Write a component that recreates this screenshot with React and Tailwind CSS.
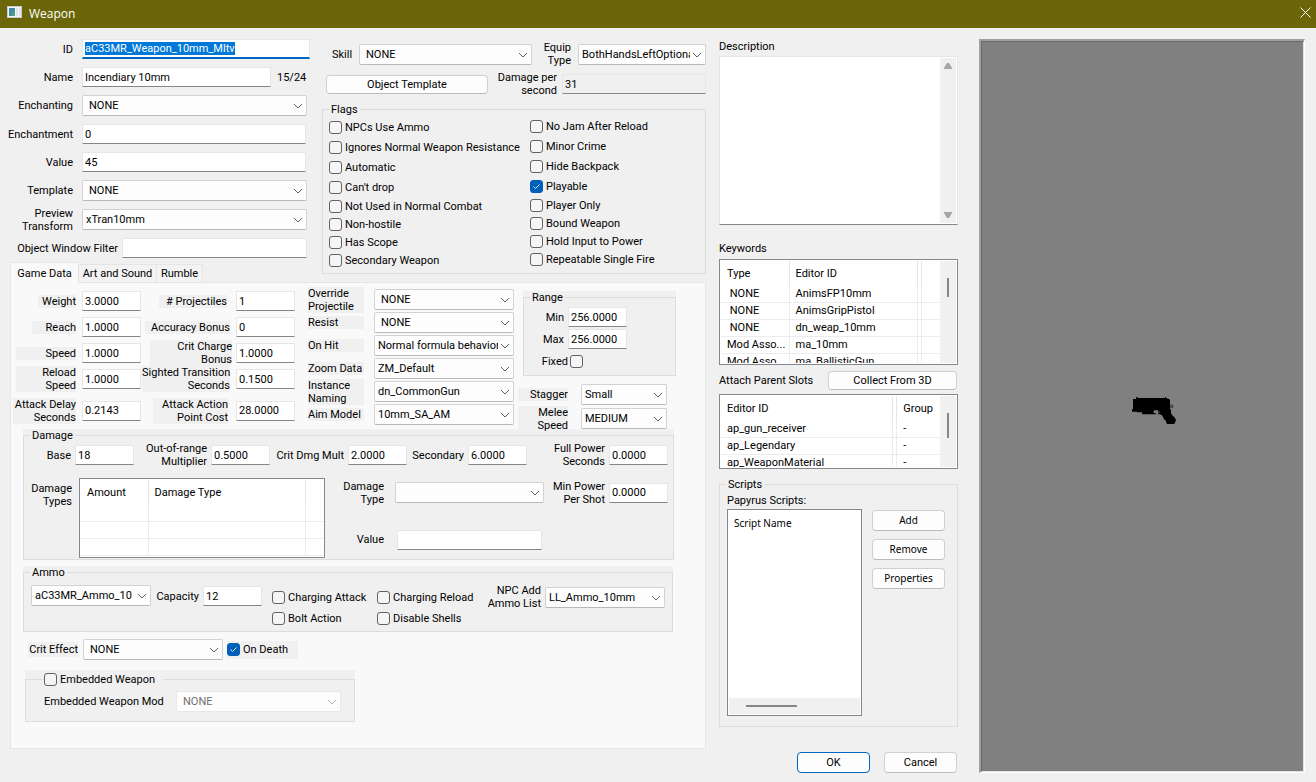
import { useEffect, useId, useRef } from "react";
import { clsx } from "clsx";

function Combo({ id, value, className, indent = false, disabled = false }) {
  return (
    <div className={clsx("relative h-[21px] shrink-0", className)}>
      <select
        id={id}
        disabled={disabled}
        className={clsx(
          "h-full w-full appearance-none overflow-hidden rounded-[2px] border bg-[#fdfdfd] pr-[15px] outline-none",
          indent ? "pl-[6px]" : "pl-[3px]",
          disabled ? "border-[#e8e8e8] bg-[#f7f7f7] text-[#707070] opacity-100" : "border-[#d2d2d2] border-b-[#b9b9b9]"
        )}
      >
        <option>{value}</option>
      </select>
      <svg
        viewBox="0 0 10 6"
        className={clsx("pointer-events-none absolute top-[8px] right-[4px] h-[6px] w-[10px]", disabled ? "text-[#b4b4b4]" : "text-[#606060]")}
        fill="none"
        stroke="currentColor"
      >
        <path d="M1 1l4 4 4-4" />
      </svg>
    </div>
  );
}

const fieldStyle =
  "h-5 min-w-0 shrink-0 rounded-[1px] border border-[#e6e6e6] border-b-[#868686] px-[2px] outline-none";

function Field({ id, value = "", className, readOnly = false }) {
  return (
    <input
      id={id}
      type="text"
      defaultValue={value}
      readOnly={readOnly}
      className={clsx(fieldStyle, readOnly ? "bg-[#f0f0f0]" : "bg-white", className)}
    />
  );
}

function Check({ label, checked = false, className }) {
  return (
    <label className={clsx("flex items-center gap-[3px] whitespace-nowrap", className)}>
      <CheckBox checked={checked} />
      {label}
    </label>
  );
}

function CheckBox({ checked = false }) {
  return (
    <span className="relative h-[13px] w-[13px] shrink-0">
      <input
        type="checkbox"
        defaultChecked={checked}
        className="peer block h-[13px] w-[13px] appearance-none rounded-[3px] border border-[#626262] bg-[#f5f5f5] checked:border-[#005fb8] checked:bg-[#005fb8]"
      />
      <svg
        viewBox="0 0 13 13"
        className="pointer-events-none absolute inset-0 hidden h-[13px] w-[13px] peer-checked:block"
        fill="none"
        stroke="#d5e6f5"
      >
        <path d="M3.5 6.5l2 2 4-4" />
      </svg>
    </span>
  );
}

function Button({ children, className, primary = false }) {
  return (
    <button
      type="button"
      className={clsx(
        "shrink-0 rounded-[4px] border bg-[#fdfdfd] text-center",
        primary ? "border-[#0067c0]" : "border-[#d0d0d0] border-b-[#bcbcbc]",
        className
      )}
    >
      {children}
    </button>
  );
}

function Group({ title, className, children }) {
  return (
    <div className="bg-[#f0f0f0]">
      <fieldset className="min-w-0 border border-[#dcdcdc]">
        <legend className="ml-[6px] h-[13px] px-[2px]">{title}</legend>
        <div className={className}>{children}</div>
      </fieldset>
    </div>
  );
}

function FormRow({ label, kind = "field", value, indent, extra, className }) {
  const id = useId();
  return (
    <div className={clsx("flex items-center gap-[9px]", kind === "combo" ? "h-[21px]" : "h-5")}>
      <label htmlFor={id} className="w-[73px] shrink-0 text-right whitespace-pre-line">
        {label}
      </label>
      {kind === "combo" ? (
        <Combo id={id} value={value} indent={indent} className={className} />
      ) : (
        <Field id={id} value={value} className={className} />
      )}
      {extra}
    </div>
  );
}

function IdRow() {
  const id = useId();
  const ref = useRef(null);
  useEffect(() => {
    ref.current.focus();
    ref.current.select();
  }, []);
  return (
    <div className="flex h-5 items-center gap-[9px]">
      <label htmlFor={id} className="w-[73px] shrink-0 text-right">
        ID
      </label>
      <input
        ref={ref}
        id={id}
        type="text"
        defaultValue="aC33MR_Weapon_10mm_Mltv"
        className="h-5 w-[228px] shrink-0 border border-[#e6e6e6] border-b-2 border-b-[#0067c0] bg-white px-[2px] outline-none selection:bg-[#0078d7] selection:text-white"
      />
    </div>
  );
}

function StatRow({ label, value, labelClass, slotClass, rowClass = "h-[26px]" }) {
  const id = useId();
  return (
    <div className={clsx("flex items-center justify-end", rowClass)}>
      <div className={clsx("flex shrink-0 justify-start", slotClass)}>
        <label htmlFor={id} className={clsx("shrink-0 bg-[#f0f0f0] text-right whitespace-pre", labelClass)}>
          {label}
        </label>
      </div>
      <Field id={id} value={value} className="w-[59px]" />
    </div>
  );
}

function DataRow({ label, value, indent }) {
  const id = useId();
  return (
    <div className="flex h-[21px] items-center gap-[10px]">
      <label htmlFor={id} className="w-[56px] shrink-0 bg-[#f0f0f0] whitespace-pre">
        {label}
      </label>
      <Combo id={id} value={value} indent={indent} className="w-[140px]" />
    </div>
  );
}

function Labeled({ label, value, labelClass, fieldClass = "w-[59px]", kind = "field", className }) {
  const id = useId();
  return (
    <div className={clsx("flex items-center gap-[4px]", className)}>
      <label htmlFor={id} className={clsx("shrink-0 text-right whitespace-pre-line", labelClass)}>
        {label}
      </label>
      {kind === "combo" ? (
        <Combo id={id} value={value} className={fieldClass} />
      ) : (
        <Field id={id} value={value} className={fieldClass} />
      )}
    </div>
  );
}

function ListView({ widths, head, rows, className, thumb }) {
  return (
    <div className={clsx("flex shrink-0 overflow-hidden border border-[#828790] bg-white p-px", className)}>
      <div className="min-w-0 flex-1 overflow-hidden">
        <table className="w-full table-fixed border-collapse">
          <colgroup>
            {widths.map((w, i) => (
              <col key={i} className={w} />
            ))}
          </colgroup>
          <thead>
            <tr className="h-6">
              {head.map((h, i) => (
                <th key={i} scope="col" className="border-r border-[#e5e5e5] p-0 pl-[6px] text-left font-normal last:border-r-0">
                  {h}
                </th>
              ))}
            </tr>
          </thead>
          <tbody>
            {rows.map((r, i) => (
              <tr key={i} className="h-[17px]">
                {r.map((c, j) => (
                  <td
                    key={j}
                    className="h-[17px] overflow-hidden border-r border-b border-[#ececec] p-0 pl-[6px] whitespace-pre last:border-r-0"
                  >
                    {c}
                  </td>
                ))}
              </tr>
            ))}
          </tbody>
        </table>
      </div>
      {thumb && (
        <div className="flex w-4 shrink-0 justify-center bg-[#f0f0f0]">
          <div className={clsx("w-[2px] bg-[#868686]", thumb)} />
        </div>
      )}
    </div>
  );
}

function TitleBar() {
  return (
    <header className="flex h-7 shrink-0 items-center bg-[#6b6608] pr-[5px] pl-[7px] font-['Open_Sans','Noto_Sans',sans-serif] text-white">
      <svg viewBox="0 0 15 12" className="mb-[4px] h-3 w-[15px]">
        <defs>
          <linearGradient id="thumb" x1="0" y1="0" x2="1" y2="1">
            <stop offset="0" stopColor="#4a7fc0" />
            <stop offset="0.5" stopColor="#3f8f9a" />
            <stop offset="1" stopColor="#5fb07c" />
          </linearGradient>
        </defs>
        <rect width="15" height="12" fill="#c3ccd8" />
        <rect x="1" y="1" width="13" height="10" fill="#f4f6f8" />
        <rect x="2" y="2" width="6" height="8" fill="url(#thumb)" />
        <rect x="9" y="2" width="2" height="8" fill="#dfe2e6" />
        <rect x="12" y="2" width="2" height="8" fill="#e3e3e3" />
      </svg>
      <h1 className="ml-[7px] text-[12px] leading-[16px]">Weapon</h1>
      <button type="button" aria-label="Close" className="mb-[3px] ml-auto h-[11px] w-[11px]">
        <svg viewBox="0 0 11 11" className="h-[11px] w-[11px]" fill="none" stroke="#fff">
          <path d="M.5 .5l10 10M10.5 .5l-10 10" />
        </svg>
      </button>
    </header>
  );
}

const flagsLeft = [
  "NPCs Use Ammo",
  "Ignores Normal Weapon Resistance",
  "Automatic",
  "Can't drop",
  "Not Used in Normal Combat",
  "Non-hostile",
  "Has Scope",
  "Secondary Weapon",
];
const flagsRight = [
  "No Jam After Reload",
  "Minor Crime",
  "Hide Backpack",
  "Playable",
  "Player Only",
  "Bound Weapon",
  "Hold Input to Power",
  "Repeatable Single Fire",
];

function FlagColumn({ items, className }) {
  return (
    <div className={className}>
      {items.map((f, i) => (
        <Check key={f} label={f} checked={f === "Playable"} className={i < 4 ? "h-5" : "h-[18px]"} />
      ))}
    </div>
  );
}

function Identity() {
  return (
    <div className="flex w-[322px] shrink-0 flex-col gap-2">
      <IdRow />
      <FormRow label="Name" value="Incendiary 10mm" className="w-[189px]" extra={<span className="-ml-[3px]">15/24</span>} />
      <FormRow label="Enchanting" kind="combo" value="NONE" indent className="w-[225px]" />
      <FormRow label="Enchantment" value="0" className="w-[224px]" />
      <FormRow label="Value" value="45" className="w-[224px]" />
      <FormRow label="Template" kind="combo" value="NONE" indent className="w-[225px]" />
      <FormRow label={"Preview\nTransform"} kind="combo" value="xTran10mm" className="w-[225px]" />
      <Labeled label="Object Window Filter" labelClass="w-[118px]" fieldClass="w-[185px]" />
    </div>
  );
}

function Usage() {
  const skill = useId();
  const equip = useId();
  const dps = useId();
  return (
    <div className="min-w-0 flex-1">
      <div className="flex h-[30px] items-center pl-[10px]">
        <label htmlFor={skill} className="w-[27px] shrink-0">
          Skill
        </label>
        <Combo id={skill} value="NONE" indent className="w-[173px]" />
        <label htmlFor={equip} className="mr-[7px] w-[39px] shrink-0 text-right whitespace-pre">
          {"Equip\nType"}
        </label>
        <Combo id={equip} value="BothHandsLeftOptional" className="w-[128px]" />
      </div>
      <div className="flex h-[30px] items-center pl-[4px]">
        <Button className="h-[19px] w-[162px]">Object Template</Button>
        <label htmlFor={dps} className="mr-[5px] w-[69px] shrink-0 text-right whitespace-pre">
          {"Damage per\nsecond"}
        </label>
        <Field id={dps} value="31" readOnly className="w-[144px]" />
      </div>
      <div className="pt-[4px]">
        <Group title="Flags" className="flex pb-[4px] pl-[6px]">
          <FlagColumn items={flagsLeft} className="w-[201px] pt-px" />
          <FlagColumn items={flagsRight} />
        </Group>
      </div>
    </div>
  );
}

function Tabs() {
  return (
    <div role="tablist" className="flex items-end">
      <button type="button" role="tab" aria-selected="true" className="-mb-px h-[21px] w-[69px] border border-b-0 border-[#e5e5e5] bg-[#f9f9f9]">
        Game Data
      </button>
      <button type="button" role="tab" aria-selected="false" className="h-[18px] w-[78px] border border-b-0 border-l-0 border-[#e5e5e5] bg-[#f3f3f3]">
        Art and Sound
      </button>
      <button type="button" role="tab" aria-selected="false" className="h-[18px] w-[46px] border border-b-0 border-l-0 border-[#e5e5e5] bg-[#f3f3f3]">
        Rumble
      </button>
    </div>
  );
}

function Stats() {
  const stagger = useId();
  const melee = useId();
  return (
    <div className="flex h-[146px] pt-[5px]">
      <div className="w-[130px]">
        <StatRow label="Weight" value="3.0000" labelClass="w-[38px]" slotClass="w-[44px]" />
        <StatRow label="Reach" value="1.0000" labelClass="w-[44px]" slotClass="w-[50px]" />
        <StatRow label="Speed" value="1.0000" labelClass="w-[60px]" slotClass="w-[66px]" />
        <StatRow label={"Reload\nSpeed"} value="1.0000" labelClass="w-[60px]" slotClass="w-[66px]" />
        <StatRow label={"Attack Delay\nSeconds"} value="0.2143" labelClass="w-[63px]" slotClass="w-[69px]" rowClass="h-[37px]" />
      </div>
      <div className="w-[154px]">
        <StatRow label="# Projectiles" value="1" labelClass="w-[68px]" slotClass="w-[77px]" />
        <StatRow label="Accuracy Bonus" value="0" labelClass="w-[85px]" slotClass="w-[91px]" />
        <StatRow label={"Crit Charge\nBonus"} value="1.0000" labelClass="w-[82px]" slotClass="w-[86px]" />
        <StatRow label={"Sighted Transition\nSeconds"} value="0.1500" labelClass="w-[88px]" slotClass="w-[94px]" />
        <StatRow label={"Attack Action\nPoint Cost"} value="28.0000" labelClass="w-[75px]" slotClass="w-[83px]" rowClass="h-[37px]" />
      </div>
      <div className="ml-[13px] flex w-[206px] flex-col gap-[2px] pt-px">
        <DataRow label={"Override\nProjectile"} value="NONE" indent />
        <DataRow label="Resist" value="NONE" indent />
        <DataRow label="On Hit" value="Normal formula behavior" />
        <DataRow label="Zoom Data" value="ZM_Default" />
        <DataRow label={"Instance\nNaming"} value="dn_CommonGun" />
        <DataRow label="Aim Model" value="10mm_SA_AM" />
      </div>
      <div className="ml-[4px] w-[158px] pt-[3px]">
        <div className="pl-[5px]">
          <Group title="Range" className="flex h-[71px] flex-col gap-[2px] pt-[3px] pl-[8px]">
            <Labeled label="Min" value="256.0000" labelClass="w-[32px]" className="h-5" />
            <Labeled label="Max" value="256.0000" labelClass="w-[32px]" className="h-5" />
            <label className="flex h-5 items-center gap-[2px]">
              <span className="w-[36px] text-right">Fixed</span>
              <CheckBox />
            </label>
          </Group>
        </div>
        <div className="mt-2 flex h-[21px] items-center gap-[13px]">
          <label htmlFor={stagger} className="w-[50px] bg-[#f0f0f0] text-right">
            Stagger
          </label>
          <Combo id={stagger} value="Small" className="w-[86px]" />
        </div>
        <div className="mt-[3px] flex h-[21px] items-center gap-[13px]">
          <label htmlFor={melee} className="w-[50px] bg-[#f0f0f0] text-right whitespace-pre">
            {"Melee\nSpeed"}
          </label>
          <Combo id={melee} value="MEDIUM" className="w-[86px]" />
        </div>
      </div>
    </div>
  );
}

function Damage() {
  return (
    <Group title="Damage" className="h-[117px]">
      <div className="flex h-[26px] items-center">
        <Labeled label="Base" value="18" labelClass="w-[47px]" className="w-[110px]" />
        <Labeled label={"Out-of-range\nMultiplier"} value="0.5000" labelClass="w-[73px]" className="w-[136px]" />
        <Labeled label="Crit Dmg Mult" value="2.0000" labelClass="w-[74px]" className="w-[137px]" />
        <Labeled label="Secondary" value="6.0000" labelClass="w-[57px]" className="w-[120px]" />
        <Labeled label={"Full Power\nSeconds"} value="0.0000" labelClass="w-[78px]" />
      </div>
      <div className="mt-[10px] flex">
        <div className="w-[48px] pt-[4px] text-right whitespace-pre">{"Damage\nTypes"}</div>
        <ListView
          className="ml-[7px] h-[80px] w-[246px]"
          widths={["w-[67px]", "w-[157px]", "w-[18px]"]}
          head={["Amount", "Damage Type", ""]}
          rows={[
            ["", "", ""],
            ["", "", ""],
            ["", "", ""],
          ]}
        />
        <div className="ml-[4px] flex flex-col gap-[26px] pt-[4px]">
          <Labeled label={"Damage\nType"} kind="combo" value="" labelClass="w-[55px] mr-[7px]" fieldClass="w-[149px]" className="h-[21px]" />
          <Labeled label="Value" value="" labelClass="w-[55px] mr-[9px]" fieldClass="w-[145px]" className="h-[21px]" />
        </div>
        <div className="pt-[4px]">
          <Labeled label={"Min Power\nPer Shot"} value="0.0000" labelClass="w-[61px]" className="h-[21px]" />
        </div>
      </div>
    </Group>
  );
}

function Ammo() {
  const ammo = useId();
  return (
    <Group title="Ammo" className="flex h-[52px] items-start pl-[7px]">
      <label htmlFor={ammo} className="sr-only">
        Ammo
      </label>
      <Combo id={ammo} value="aC33MR_Ammo_10" className="mt-[6px] w-[120px]" />
      <Labeled label="Capacity" value="12" labelClass="w-[48px]" className="mt-[7px]" />
      <div className="ml-[10px] w-[105px] pt-[8px]">
        <Check label="Charging Attack" className="h-[21px]" />
        <Check label="Bolt Action" className="h-[21px]" />
      </div>
      <div className="w-[98px] pt-[8px]">
        <Check label="Charging Reload" className="h-[21px]" />
        <Check label="Disable Shells" className="h-[21px]" />
      </div>
      <Labeled label={"NPC Add\nAmmo List"} kind="combo" value="LL_Ammo_10mm" labelClass="w-[66px]" fieldClass="w-[120px]" className="mt-[5px]" />
    </Group>
  );
}

function GameData() {
  const crit = useId();
  const mod = useId();
  return (
    <section className="border border-[#e5e5e5] bg-[#f9f9f9] pb-[26px]">
      <Stats />
      <div className="ml-[12px] w-[651px]">
        <Damage />
      </div>
      <div className="mt-[6px] ml-[12px] w-[650px]">
        <Ammo />
      </div>
      <div className="mt-[7px] ml-[17px] flex h-[21px] items-center">
        <label htmlFor={crit} className="w-[50px] bg-[#f0f0f0] py-px text-right whitespace-nowrap">
          Crit Effect
        </label>
        <Combo id={crit} value="NONE" indent className="ml-[5px] w-[140px]" />
        <Check label="On Death" checked className="ml-[4px] h-[18px] w-[71px] bg-[#f0f0f0]" />
      </div>
      <div className="mt-[10px] ml-[14px] w-[330px] bg-[#f0f0f0]">
        <fieldset className="min-w-0 border border-[#dcdcdc] pb-[9px]">
          <legend className="ml-[18px] w-[119px]">
            <Check label="Embedded Weapon" className="h-[18px]" />
          </legend>
          <div className="flex items-center pt-[3px] pl-[18px]">
            <label htmlFor={mod} className="w-[132px] shrink-0">
              Embedded Weapon Mod
            </label>
            <Combo id={mod} value="NONE" indent disabled className="w-[165px]" />
          </div>
        </fieldset>
      </div>
    </section>
  );
}

function Details() {
  const desc = useId();
  return (
    <div className="ml-[13px] flex w-[239px] shrink-0 flex-col">
      <label htmlFor={desc} className="h-[17px] pt-px">
        Description
      </label>
      <div className="flex h-[169px] border border-[#e6e6e6] border-b-[#868686] bg-white">
        <textarea id={desc} className="min-w-0 flex-1 resize-none overflow-hidden p-[2px] outline-none" />
        <div className="m-px flex w-4 flex-col items-center justify-between bg-[#f0f0f0] py-[5px]">
          <svg viewBox="0 0 8 6" className="h-[6px] w-[8px]" fill="#a6a6a6">
            <path d="M3 0h2l3 5v1H0V5z" />
          </svg>
          <svg viewBox="0 0 8 6" className="h-[6px] w-[8px]" fill="#a6a6a6">
            <path d="M3 6h2l3-5V0H0v1z" />
          </svg>
        </div>
      </div>
      <h2 className="mt-[17px] h-[17px]">Keywords</h2>
      <ListView
        className="h-[106px]"
        widths={["w-[68px]", "w-[128px]", "w-[4px]", "w-[19px]"]}
        head={["Type", "Editor ID", "", ""]}
        rows={[
          [" NONE", "AnimsFP10mm", "", ""],
          [" NONE", "AnimsGripPistol", "", ""],
          [" NONE", "dn_weap_10mm", "", ""],
          ["Mod Asso...", "ma_10mm", "", ""],
          ["Mod Asso...", "ma_BallisticGun", "", ""],
        ]}
        thumb="mt-[17px] h-[19px]"
      />
      <div className="mt-[5px] flex h-5 items-center justify-between pr-px">
        <h2>Attach Parent Slots</h2>
        <Button className="h-[19px] w-[129px]">Collect From 3D</Button>
      </div>
      <ListView
        className="mt-[4px] h-[75px]"
        widths={["w-[171px]", "w-[4px]", "w-[43px]"]}
        head={["Editor ID", "", "Group"]}
        rows={[
          ["ap_gun_receiver", "", "-"],
          ["ap_Legendary", "", "-"],
          ["ap_WeaponMaterial", "", "-"],
        ]}
        thumb="mt-[17px] h-[25px]"
      />
      <div className="mt-[9px]">
        <Group title="Scripts" className="pr-[12px] pb-[10px] pl-[7px]">
          <p className="py-[2px] pt-[3px]">Papyrus Scripts:</p>
          <div className="flex items-start justify-between font-['Noto_Sans',sans-serif] text-[10px]">
            <div className="flex h-[207px] w-[135px] flex-col border border-[#828790] bg-white p-px">
              <div className="flex-1 pt-[6px] pl-[5px]">Script Name</div>
              <div className="flex h-4 items-center bg-[#f0f0f0] pl-[17px]">
                <div className="h-[2px] w-[51px] bg-[#868686]" />
              </div>
            </div>
            <div className="flex flex-col gap-2 pt-px">
              <Button className="h-[21px] w-[73px]">Add</Button>
              <Button className="h-[21px] w-[73px]">Remove</Button>
              <Button className="h-[21px] w-[73px]">Properties</Button>
            </div>
          </div>
        </Group>
      </div>
      <div className="mt-auto flex justify-end gap-[14px] pr-px">
        <Button primary className="h-[21px] w-[73px]">
          OK
        </Button>
        <Button className="h-[21px] w-[73px]">Cancel</Button>
      </div>
    </div>
  );
}

function Preview() {
  return (
    <div className="ml-[21px] flex min-w-0 flex-1 border-t-2 border-r border-b border-l-2 border-t-[#a0a0a0] border-r-white border-b-white border-l-[#a0a0a0]">
      <div className="relative flex-1 border border-t-[#696969] border-r-[#e3e3e3] border-b-[#e3e3e3] border-l-[#696969] bg-[#808080]">
        <svg viewBox="60 48 144 90" className="absolute top-[48.5%] left-[46%] h-[30px] w-[48px]">
          <path d="M69 57h9v-5h6v2h81v-3h3v3l9 3 3 3v26l3 4v9l3 6 6 5 3 5 3 4-3 10-3 3h-21l-3-6v-4l-6-4-6-12-6-3H96v-6H81v-2H66v-8h3z" />
          <path d="M132 91h12l1 12-5 1-4-5-6-1z" fill="#808080" />
          <path d="M147 93v5" stroke="#808080" strokeWidth="2" />
          <circle cx="185" cy="79" r="4" fill="none" stroke="#000" strokeWidth="2" />
        </svg>
      </div>
    </div>
  );
}

export default function App() {
  return (
    <div className="flex min-h-screen flex-col bg-[#f0f0f0] font-['Roboto','Liberation_Sans',sans-serif] text-[11px] leading-[13px] text-black">
      <TitleBar />
      <main className="flex flex-1 pt-[11px] pr-[11px] pb-[9px]">
        <div className="w-[706px] shrink-0">
          <div className="flex">
            <Identity />
            <Usage />
          </div>
          <div className="-mt-[12px] ml-[10px]">
            <Tabs />
            <GameData />
          </div>
        </div>
        <Details />
        <Preview />
      </main>
    </div>
  );
}
